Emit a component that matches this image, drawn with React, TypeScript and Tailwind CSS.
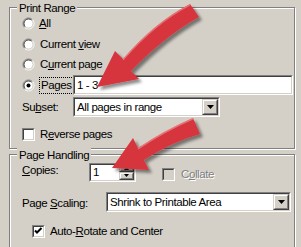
import React from "react";

const Sunken = ({ className = "", inner = "bg-white", children }: { className?: string; inner?: string; children?: React.ReactNode }) => (
  <div className={`border border-t-[#808080] border-l-[#808080] border-r-white border-b-white ${className}`}>
    <div className={`h-full w-full border border-t-[#404040] border-l-[#404040] border-r-[#d4d0c8] border-b-[#d4d0c8] ${inner} flex items-center relative`}>
      {children}
    </div>
  </div>
);

const Raised = ({ className = "", children }: { className?: string; children?: React.ReactNode }) => (
  <div className={`border border-t-[#d4d0c8] border-l-[#d4d0c8] border-r-[#404040] border-b-[#404040] ${className}`}>
    <div className="h-full w-full border border-t-white border-l-white border-r-[#808080] border-b-[#808080] bg-[#d4d0c8] flex items-center justify-center">
      {children}
    </div>
  </div>
);

const DownTri = () => (
  <svg width="7" height="4" viewBox="0 0 7 4">
    <polygon points="0,0 7,0 3.5,4" fill="#000" />
  </svg>
);

const Radio = ({ checked = false }: { checked?: boolean }) => (
  <svg width="13" height="13" viewBox="0 0 13 13" className="shrink-0">
    <circle cx="6.5" cy="6.5" r="4.5" fill="#fff" />
    <path d="M2.6 10.4 A5.5 5.5 0 0 1 10.4 2.6" stroke="#808080" strokeWidth="1" fill="none" />
    <path d="M10.4 2.6 A5.5 5.5 0 0 1 2.6 10.4" stroke="#fff" strokeWidth="1" fill="none" />
    <path d="M3.3 9.7 A4.5 4.5 0 0 1 9.7 3.3" stroke="#404040" strokeWidth="1" fill="none" />
    <path d="M9.7 3.3 A4.5 4.5 0 0 1 3.3 9.7" stroke="#d4d0c8" strokeWidth="1" fill="none" />
    {checked && <circle cx="6.5" cy="6.5" r="2" fill="#000" />}
  </svg>
);

const Check = ({ checked = false, disabled = false }: { checked?: boolean; disabled?: boolean }) => (
  <Sunken className="w-[13px] h-[13px] shrink-0" inner={disabled ? "bg-[#d4d0c8]" : "bg-white"}>
    {checked && (
      <svg width="9" height="9" viewBox="0 0 9 9" className="absolute left-0 top-0">
        <path d="M1 3.5 L3 5.5 L7.5 1" stroke="#000" strokeWidth="2" fill="none" />
      </svg>
    )}
  </Sunken>
);

const Group = ({ title, className = "", children }: { title: string; className?: string; children?: React.ReactNode }) => (
  <div className={`relative ml-[9px] w-[286px] border border-[#808080] shadow-[inset_1px_1px_0_#fff,1px_1px_0_#fff] ${className}`}>
    <span className="absolute left-[7px] top-[-7px] bg-[#d4d0c8] px-[2px] leading-[15px]">{title}</span>
    {children}
  </div>
);

export default function App() {
  return (
    <div className="relative w-[301px] h-[247px] overflow-hidden bg-[#d4d0c8] text-black text-[11.5px] leading-[15px] tracking-[-0.4px] font-['Liberation_Sans',Arial,sans-serif]">
      <div className="pt-[7px] flex flex-col">
        <Group title="Print Range" className="h-[142px]">
          <div className="flex flex-col pl-[12px] pt-[5px]">
            <div className="h-[21px] flex items-center">
              <Radio />
              <span className="ml-[4px]"><u>A</u>ll</span>
            </div>
            <div className="h-[20px] flex items-center">
              <Radio />
              <span className="ml-[5px]">Current <u>v</u>iew</span>
            </div>
            <div className="h-[21px] flex items-center">
              <Radio />
              <span className="ml-[5px]">C<u>u</u>rrent page</span>
            </div>
            <div className="h-[20px] flex items-center">
              <Radio checked />
              <div className="w-[38px] pl-[4px] flex">
                <span className="border border-dotted border-black px-[1px] leading-[15px]">Pa<u>g</u>es</span>
              </div>
              <Sunken className="w-[220px] h-[20px]">
                <span className="pl-[2px]">1 - 3</span>
              </Sunken>
            </div>
            <div className="h-[20px] mt-[2px] flex items-center">
              <span className="w-[51px]">Su<u>b</u>set:</span>
              <Sunken className="w-[147px] h-[20px]">
                <span className="pl-[2px] flex-1">All pages in range</span>
                <Raised className="w-[16px] h-[16px]">
                  <DownTri />
                </Raised>
              </Sunken>
            </div>
            <div className="h-[20px] mt-[7px] flex items-center">
              <Check />
              <span className="ml-[5px]">R<u>e</u>verse pages</span>
            </div>
          </div>
        </Group>
        <Group title="Page Handling" className="mt-[5px] h-[120px]">
          <div className="flex flex-col pl-[12px] pt-[7px]">
            <div className="h-[20px] flex items-center">
              <span className="w-[67px] mb-[4px]"><u>C</u>opies:</span>
              <Sunken className="w-[47px] h-[19px]">
                <span className="pl-[2px] flex-1">1</span>
                <div className="flex flex-col w-[15px] h-full">
                  <Raised className="w-[15px] flex-1"><svg width="5" height="3"><polygon points="0,3 5,3 2.5,0" fill="#000" /></svg></Raised>
                  <Raised className="w-[15px] flex-1"><svg width="5" height="3"><polygon points="0,0 5,0 2.5,3" fill="#000" /></svg></Raised>
                </div>
              </Sunken>
              <div className="ml-[26px] mt-[5px] flex items-center">
                <Check disabled />
                <span className="ml-[6px] text-[#808080] [text-shadow:1px_1px_0_#fff]">C<u>o</u>llate</span>
              </div>
            </div>
            <div className="h-[20px] mt-[10px] flex items-center">
              <span className="w-[84px] mt-[2px]">Page <u>S</u>caling:</span>
              <Sunken className="w-[185px] h-[20px]">
                <span className="pl-[2px] flex-1">Shrink to Printable Area</span>
                <Raised className="w-[16px] h-[16px]">
                  <DownTri />
                </Raised>
              </Sunken>
            </div>
            <div className="h-[20px] mt-[9px] pl-[10px] flex items-center">
              <Check checked />
              <span className="ml-[5px]">Auto-<u>R</u>otate and Center</span>
            </div>
          </div>
        </Group>
      </div>
      <svg className="absolute inset-0 pointer-events-none" width="301" height="247" viewBox="0 0 301 247">
        <defs>
          <filter id="sh" x="-20%" y="-20%" width="140%" height="140%">
            <feDropShadow dx="3" dy="3" stdDeviation="1.6" floodColor="#000" floodOpacity="0.45" />
          </filter>
        </defs>
        <g filter="url(#sh)">
          <path d="M190 4 Q155 22 123 59 L115 51 L97 87 L139 79 L131 71 Q165 36 199 17 Z" fill="#d7353c" />
          <path d="M193 118 Q165 130 138 148 L133 138 L112 168 L149 170 L144 160 Q172 142 200 134 Z" fill="#d7353c" />
        </g>
        <path d="M190 4.8 Q155 22.8 123 59.8" stroke="#ee8a8f" strokeWidth="1.5" fill="none" opacity="0.7" />
        <path d="M193 118.8 Q165 130.8 138 148.8" stroke="#ee8a8f" strokeWidth="1.5" fill="none" opacity="0.7" />
      </svg>
    </div>
  );
}
